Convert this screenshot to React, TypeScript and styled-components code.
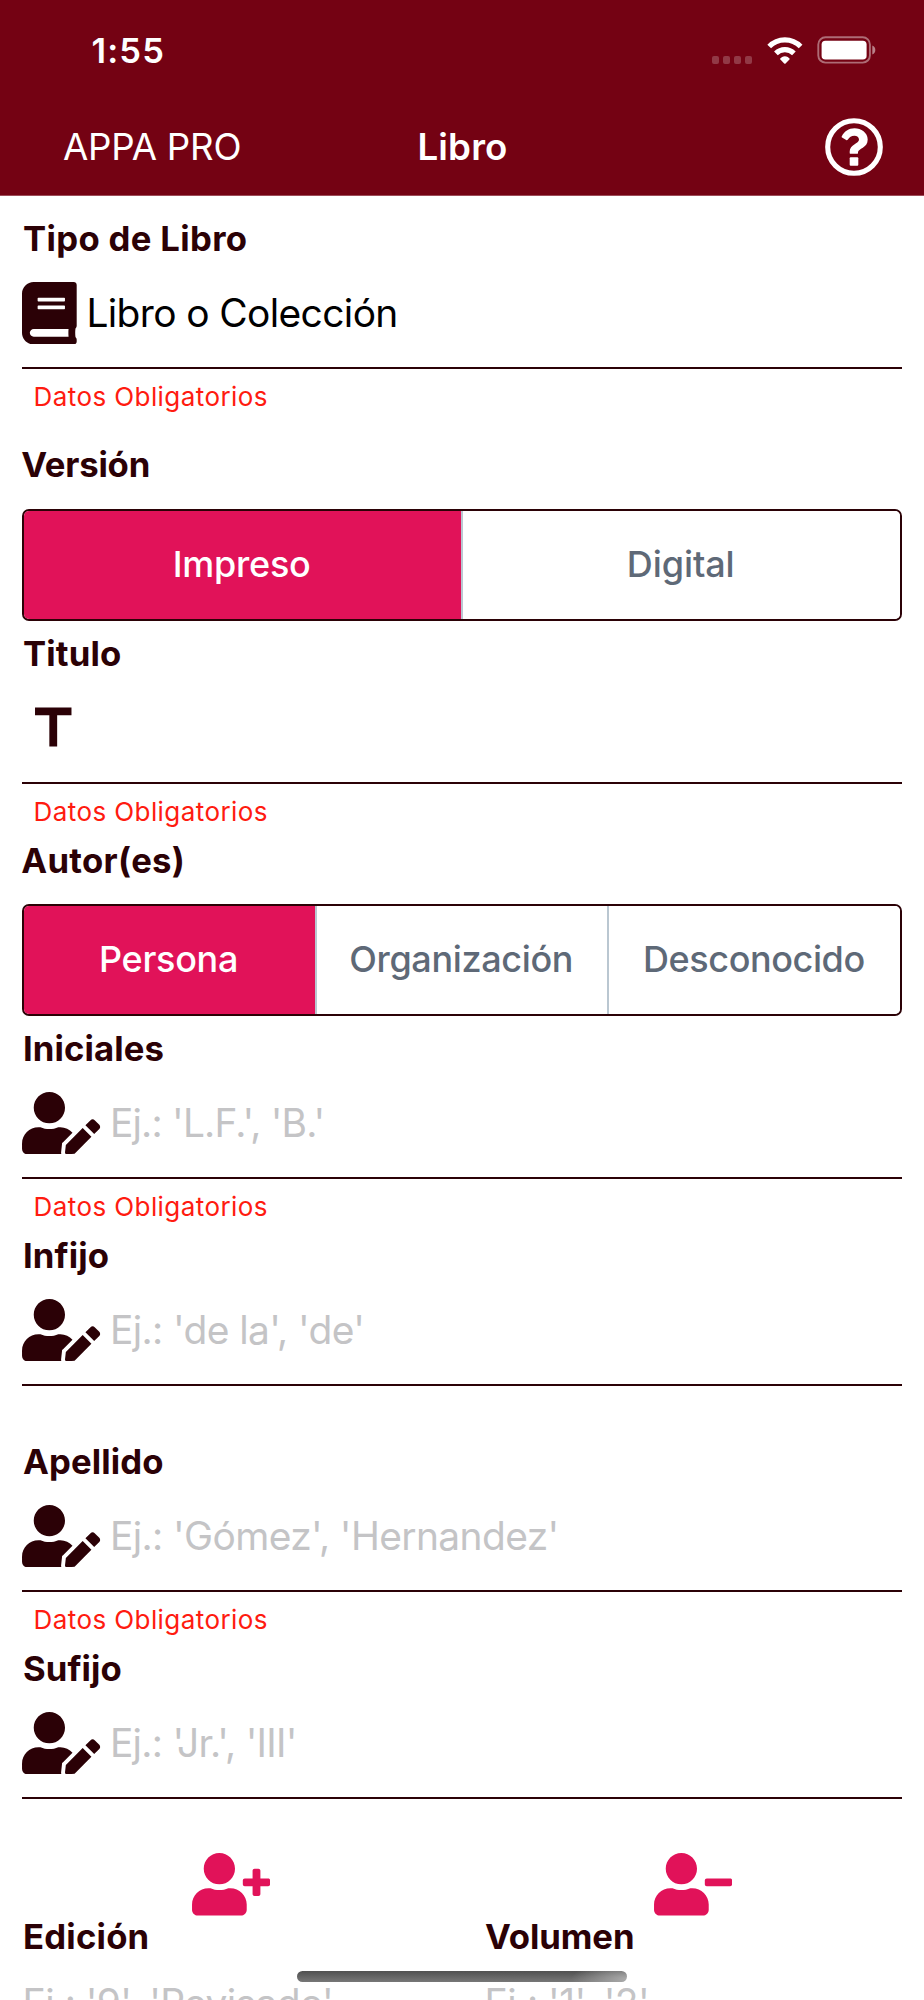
import React from 'react';
import styled, { createGlobalStyle } from 'styled-components';
import { FaBook, FaUserEdit, FaUserPlus, FaUserMinus } from 'react-icons/fa';
import { MdTitle } from 'react-icons/md';

const color = {
  header: '#740213',
  dark: '#2b0106',
  pink: '#e11259',
  slate: '#5e6977',
  divider: '#bac7d1',
  hint: '#c4c4c6',
  error: '#ff1b10',
};

const GlobalStyle = createGlobalStyle`
  * { box-sizing: border-box; }
  body { margin: 0; background: #fff; }
`;

const Screen = styled.div`
  position: relative;
  width: 924px;
  height: 2000px;
  overflow: hidden;
  background: #fff;
  font-family: Inter, "Liberation Sans", sans-serif;
`;

const Text = styled.span<{ $track?: number }>`
  letter-spacing: ${(p) => p.$track ?? 0}px;
  white-space: pre;
`;

/* Header */

const Header = styled.header`
  height: 196px;
  background: ${color.header};
  color: #fff;
  border-bottom: 1px solid #9d4c58;
`;

const StatusBar = styled.div`
  display: flex;
  align-items: center;
  justify-content: space-between;
  height: 98px;
  padding: 3px 47.6px 0 91.5px;
  font-size: 34.5px;
  font-weight: 600;
`;

const StatusIcons = styled.div`
  display: flex;
  align-items: flex-end;
  margin-top: -1px;
`;

const SignalDots = styled.div`
  display: flex;
  gap: 3.6px;
  margin: 0 14.3px 0.5px 0;
`;

const Dot = styled.i`
  width: 7.5px;
  height: 7.5px;
  border-radius: 2px;
  background: rgba(255, 255, 255, 0.22);
`;

const WifiSvg = styled.svg`
  display: block;
  width: 36px;
  height: 27px;
  margin-right: 14.7px;
`;

const BatterySvg = styled.svg`
  display: block;
  width: 59px;
  height: 28px;
`;

const NavBar = styled.nav`
  display: grid;
  grid-template-columns: 1fr auto 1fr;
  align-items: center;
  height: 97px;
  padding: 0 41px 0 63px;
  font-size: 36.7px;
`;

const BackLink = styled.div`
  font-weight: 400;
`;

const Title = styled.h1`
  margin: 0 0 0 -21px;
  font-size: inherit;
  font-weight: 600;
`;

const HelpSvg = styled.svg`
  display: block;
  justify-self: end;
  width: 58px;
  height: 58px;
`;

/* Form */

const Form = styled.main`
  padding: 22px 22px 0;
`;

const Label = styled.div<{ $inset?: number }>`
  height: 40px;
  padding-left: ${(p) => p.$inset ?? 0}px;
  line-height: 40px;
  font-size: 34.7px;
  font-weight: 700;
  color: ${color.dark};
`;

const GroupLabel = styled(Label)`
  margin-left: -0.8px;
`;

const InputRow = styled.div`
  display: flex;
  align-items: center;
  height: 111px;
  border-bottom: 2px solid ${color.dark};
  color: ${color.dark};
`;

const IconSlot = styled.div<{ $width: number }>`
  flex: none;
  width: ${(p) => p.$width}px;
  margin: 1px 9.3px 0 0.4px;

  svg {
    display: block;
    width: ${(p) => p.$width}px;
    height: 62.5px;
  }
`;

const InputText = styled.div<{ $filled?: boolean }>`
  font-size: 38.9px;
  color: ${(p) => (p.$filled ? '#000' : color.hint)};
`;

const Helper = styled.div<{ $empty?: boolean }>`
  height: ${(p) => (p.$empty ? 55 : 56)}px;
  padding-left: 11.5px;
  line-height: 55px;
  font-size: 26px;
  color: ${color.error};
`;

const OptionGroup = styled.section<{ $top?: number; $gap: number }>`
  display: flex;
  flex-direction: column;
  gap: ${(p) => p.$gap}px;
  padding: ${(p) => p.$top ?? 0}px 0 12px;
`;

const Segments = styled.div`
  display: flex;
  height: 112px;
  border: 2px solid ${color.dark};
  border-radius: 7px;
  overflow: hidden;
`;

const Segment = styled.button<{ $active?: boolean }>`
  box-sizing: content-box;
  flex: 1 1 0;
  display: flex;
  align-items: center;
  justify-content: center;
  min-width: 0;
  margin: 0;
  padding: 0 1.6px 2px 0;
  border: 0;
  background: ${(p) => (p.$active ? color.pink : '#fff')};
  color: ${(p) => (p.$active ? '#fff' : color.slate)};
  font-family: inherit;
  font-size: 36px;
  font-weight: 500;

  & + & {
    border-left: 2px solid ${color.divider};
  }
`;

const Columns = styled.div`
  display: grid;
  grid-template-columns: 1fr 1fr;
`;

const Actions = styled(Columns)`
  margin-top: -1px;
  height: 63px;
`;

const ActionButton = styled.button`
  display: flex;
  justify-content: center;
  padding: 0;
  border: 0;
  background: none;
  color: ${color.pink};

  svg {
    display: block;
    width: 78.2px;
    height: 62.5px;
  }
`;

const Column = styled.div`
  padding-left: 22px;
`;

const PlainInput = styled(InputText)`
  padding-left: 0.5px;
  line-height: 93px;
`;

const HomeIndicator = styled.div`
  position: absolute;
  left: 297px;
  top: 1971px;
  width: 330px;
  height: 11px;
  border-radius: 5.5px;
  background:
    radial-gradient(ellipse 56px 18px at 100% 75%, rgba(178, 178, 178, 0.9), rgba(178, 178, 178, 0)),
    linear-gradient(#505050, #777);
`;

function Wifi() {
  return (
    <WifiSvg viewBox="0 0 36 27" fill="none">
      <path d="M2.2 9.6A21.6 21.6 0 0 1 33.6 9.6" stroke="#fff" strokeWidth="5.1" />
      <path d="M8.9 16.4A12.6 12.6 0 0 1 26.9 16.4" stroke="#fff" strokeWidth="5.1" />
      <path d="M12.9 22A5.9 5.9 0 0 1 22.9 22L18.6 26.4Q17.9 27 17.2 26.4Z" fill="#fff" />
    </WifiSvg>
  );
}

function Battery() {
  return (
    <BatterySvg viewBox="0 0 59 28" fill="none">
      <rect x="1.3" y="1.2" width="51.6" height="25.4" rx="7.2" stroke="#fff" strokeOpacity="0.42" strokeWidth="1.9" />
      <rect x="4.6" y="4.8" width="45" height="18.8" rx="3.8" fill="#fff" />
      <path d="M55.3 9.6Q58.3 10.8 58.3 14T55.3 18.6Z" fill="#fff" fillOpacity="0.5" />
    </BatterySvg>
  );
}

function Help() {
  return (
    <HelpSvg viewBox="-29 -29 58 58">
      <circle r="26.3" fill="none" stroke="#fff" strokeWidth="5.1" />
      <path
        fill="#fff"
        d="M-12.3-10.6C-9.5-15.6-5.5-18.7.6-18.7C7-18.7 13.7-14.2 13.7-7.5C13.7 1.2 4 1.5 4 5.2V5.9Q4 6.8 3 6.8H-3.4Q-4.3 6.8-4.3 5.9V4.6C-4.3-2.6 5-3.6 5-7.3C5-9.8 3-11.2.4-11.2C-2.8-11.2-4.4-9.6-6.3-7.2Q-7-6.4-7.8-7L-12-9.6Q-12.7-10.1-12.3-10.6Z"
      />
      <rect x="-4.3" y="10.3" width="8.6" height="8.4" rx="1" fill="#fff" />
    </HelpSvg>
  );
}

interface FieldProps {
  label: string;
  labelTrack: number;
  icon: React.ReactNode;
  iconWidth: number;
  text?: string;
  textTrack?: number;
  filled?: boolean;
  required?: boolean;
}

function Field({ label, labelTrack, icon, iconWidth, text, textTrack, filled, required }: FieldProps) {
  return (
    <section>
      <Label $inset={1}>
        <Text $track={labelTrack}>{label}</Text>
      </Label>
      <InputRow>
        <IconSlot $width={iconWidth}>{icon}</IconSlot>
        {text && (
          <InputText $filled={filled}>
            <Text $track={textTrack}>{text}</Text>
          </InputText>
        )}
      </InputRow>
      <Helper $empty={!required}>{required && <Text $track={0.42}>Datos Obligatorios</Text>}</Helper>
    </section>
  );
}

export default function App() {
  return (
    <Screen>
      <GlobalStyle />
      <Header>
        <StatusBar>
          <Text $track={1.14}>1:55</Text>
          <StatusIcons>
            <SignalDots>
              <Dot />
              <Dot />
              <Dot />
              <Dot />
            </SignalDots>
            <Wifi />
            <Battery />
          </StatusIcons>
        </StatusBar>
        <NavBar>
          <BackLink>
            <Text $track={-0.25}>APPA PRO</Text>
          </BackLink>
          <Title>
            <Text $track={0.13}>Libro</Text>
          </Title>
          <Help />
        </NavBar>
      </Header>

      <Form>
        <Field
          label="Tipo de Libro"
          labelTrack={0.33}
          icon={<FaBook />}
          iconWidth={54.7}
          text="Libro o Colección"
          textTrack={-0.61}
          filled
          required
        />
        <OptionGroup $top={19} $gap={25}>
          <GroupLabel>
            <Text $track={-0.2}>Versión</Text>
          </GroupLabel>
          <Segments>
            <Segment $active>
              <Text $track={-0.25}>Impreso</Text>
            </Segment>
            <Segment>
              <Text $track={-0.1}>Digital</Text>
            </Segment>
          </Segments>
        </OptionGroup>
        <Field label="Titulo" labelTrack={0.15} icon={<MdTitle />} iconWidth={62.5} required />
        <OptionGroup $gap={24}>
          <GroupLabel>
            <Text $track={0.3}>Autor(es)</Text>
          </GroupLabel>
          <Segments>
            <Segment $active>
              <Text $track={-0.29}>Persona</Text>
            </Segment>
            <Segment>
              <Text $track={-0.36}>Organización</Text>
            </Segment>
            <Segment>
              <Text $track={-0.4}>Desconocido</Text>
            </Segment>
          </Segments>
        </OptionGroup>
        <Field
          label="Iniciales"
          labelTrack={0.1}
          icon={<FaUserEdit />}
          iconWidth={78.2}
          text="Ej.: 'L.F.', 'B.'"
          textTrack={-0.8}
          required
        />
        <Field
          label="Infijo"
          labelTrack={0.1}
          icon={<FaUserEdit />}
          iconWidth={78.2}
          text="Ej.: 'de la', 'de'"
          textTrack={-0.6}
        />
        <Field
          label="Apellido"
          labelTrack={0.12}
          icon={<FaUserEdit />}
          iconWidth={78.2}
          text="Ej.: 'Gómez', 'Hernandez'"
          textTrack={-0.6}
          required
        />
        <Field
          label="Sufijo"
          labelTrack={0.06}
          icon={<FaUserEdit />}
          iconWidth={78.2}
          text="Ej.: 'Jr.', 'III'"
          textTrack={-0.72}
        />
      </Form>

      <Actions>
        <ActionButton aria-label="Agregar autor">
          <FaUserPlus />
        </ActionButton>
        <ActionButton aria-label="Quitar autor">
          <FaUserMinus />
        </ActionButton>
      </Actions>
      <Columns>
        <Column>
          <Label $inset={1}>
            <Text $track={0.2}>Edición</Text>
          </Label>
          <PlainInput>
            <Text $track={-0.59}>Ej.: '9', 'Revisado'</Text>
          </PlainInput>
        </Column>
        <Column>
          <Label $inset={1}>
            <Text $track={-0.08}>Volumen</Text>
          </Label>
          <PlainInput>
            <Text $track={-0.51}>Ej.: '1', '2'</Text>
          </PlainInput>
        </Column>
      </Columns>
      <HomeIndicator />
    </Screen>
  );
}
